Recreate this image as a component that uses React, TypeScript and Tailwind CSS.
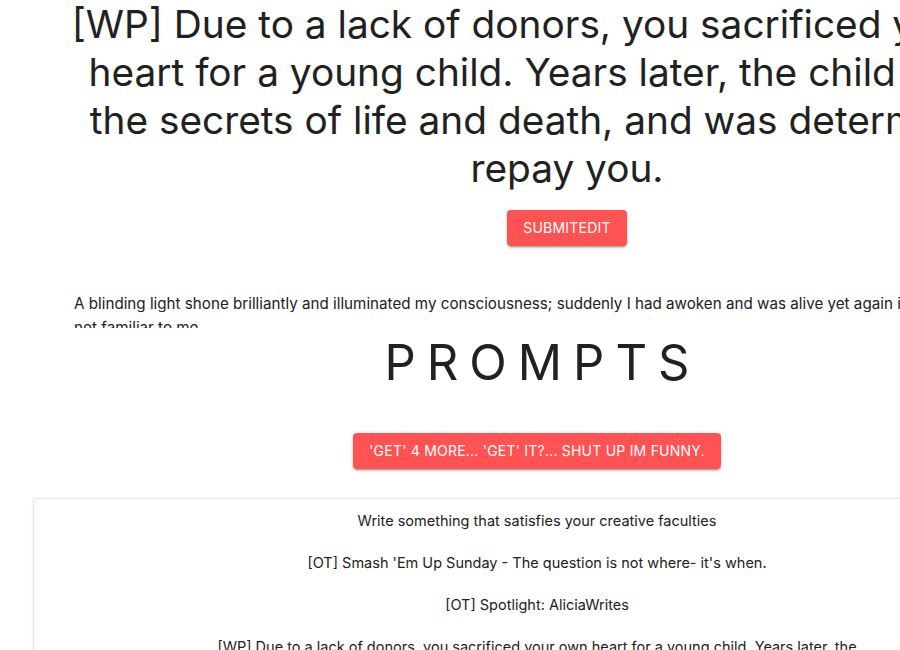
import React from "react";

export default function App() {
  const prompts = [
    "Write something that satisfies your creative faculties",
    "[OT] Smash 'Em Up Sunday - The question is not where- it's when.",
    "[OT] Spotlight: AliciaWrites",
    "[WP] Due to a lack of donors, you sacrificed your own heart for a young child. Years later, the child learned the secrets of life and death, and was determined to repay you.",
  ];
  const btn =
    "bg-[#ff5252] text-white text-[14px] font-normal tracking-[0.22px] leading-[24px] px-4 py-[6px] rounded-[4px] shadow-[0_3px_1px_-2px_rgba(0,0,0,0.2),0_2px_2px_0_rgba(0,0,0,0.14),0_1px_5px_0_rgba(0,0,0,0.12)]";
  return (
    <div className="w-[900px] h-[650px] overflow-hidden bg-white text-[#212121] font-['Inter',sans-serif]">
      <div className="w-[1100px]">
        <section className="ml-[74px] w-[986px]">
          <h1 className="-mx-[40px] text-center text-[38.8px] leading-[48px] font-normal whitespace-nowrap">
            [WP] Due to a lack of donors, you sacrificed your own
            <br />
            heart for a young child. Years later, the child learned
            <br />
            the secrets of life and death, and was determined to
            <br />
            repay you.
          </h1>
          <div className="flex justify-center mt-[18px]">
            <button className={btn}>SUBMITEDIT</button>
          </div>
          <p className="mt-[46px] text-[15.2px] leading-[24px] h-[36px] overflow-hidden">
            A blinding light shone brilliantly and illuminated my consciousness; suddenly I had awoken and was alive yet again in a world that was
            <br />
            not familiar to me.
          </p>
        </section>
        <section className="ml-[33px] w-[1008px]">
          <h2 className="mt-[7px] text-center text-[49px] leading-[56px] font-normal tracking-[11px] pl-[11px]">
            PROMPTS
          </h2>
          <div className="flex justify-center mt-[42px]">
            <button className={btn}>'GET' 4 MORE... 'GET' IT?... SHUT UP IM FUNNY.</button>
          </div>
          <div className="mt-[29px] border border-[#e6e6e6] rounded-[2px] shadow-[0_1px_3px_rgba(0,0,0,0.08)] pt-[1px]">
            <ul className="mx-auto w-[660px] text-center text-[14.5px] leading-[20px]">
              {prompts.map((p) => (
                <li key={p} className="py-[11px]">
                  {p}
                </li>
              ))}
            </ul>
          </div>
        </section>
      </div>
    </div>
  );
}
